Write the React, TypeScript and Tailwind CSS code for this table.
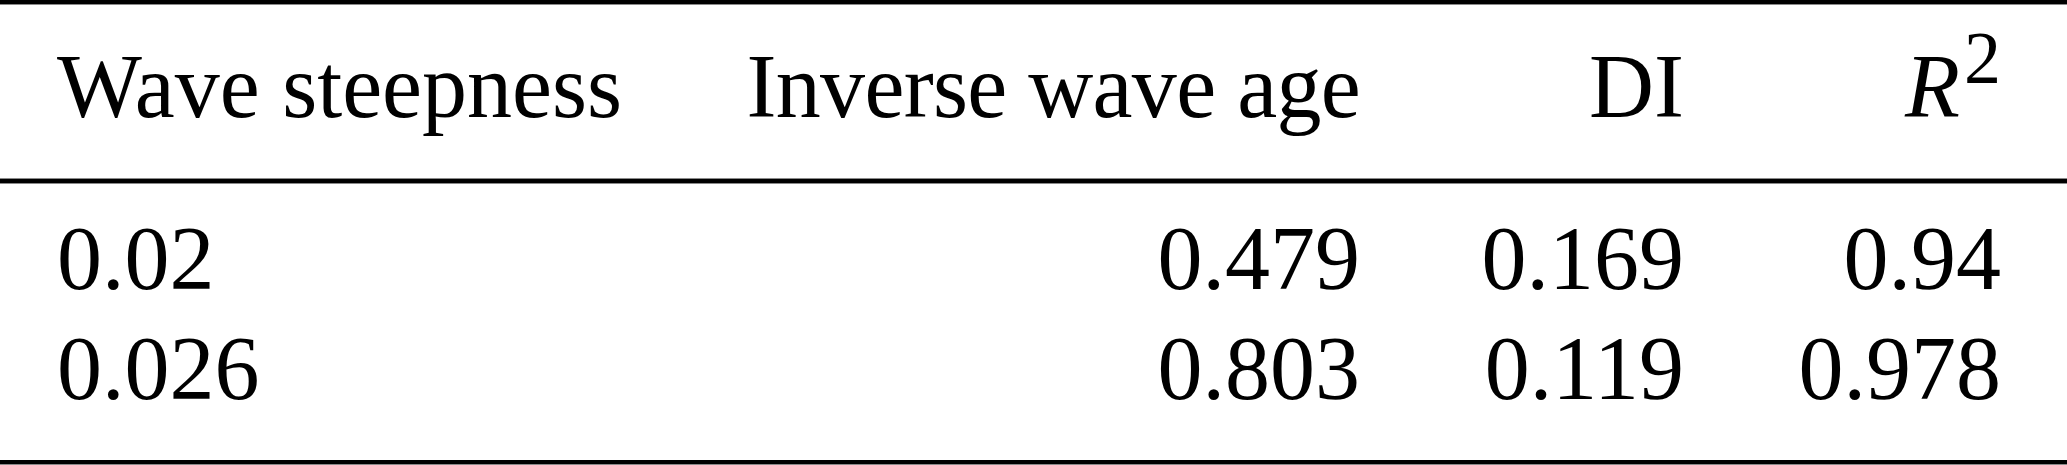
const header = ['Wave steepness', 'Inverse wave age', 'DI'];

const rows = [
  ['0.02', '0.479', '0.169', '0.94'],
  ['0.026', '0.803', '0.119', '0.978'],
];

const cols = 'grid grid-cols-[670px_633px_324px_317px] pl-[57px] pr-[66px]';

const Rule = ({ top }: { top?: boolean }) =>
  top ? (
    <div className="h-[5px] bg-black border-b border-[#8a8a8a]" />
  ) : (
    <div className="h-[6px] bg-black border-y border-[#8a8a8a]" />
  );

export default function App() {
  return (
    <div className="w-[2067px] h-[465px] bg-white text-black font-['Liberation_Serif','Times_New_Roman',serif] text-[90px] leading-[110px]">
      <Rule top />
      <div className={`${cols} pt-[27px] pb-[36px]`}>
        <div className="text-left whitespace-nowrap">{header[0]}</div>
        <div className="text-right whitespace-nowrap tracking-[-0.7px]">{header[1]}</div>
        <div className="text-right whitespace-nowrap">{header[2]}</div>
        <div className="text-right whitespace-nowrap">
          <i>R</i>
          <span className="relative -top-[34px] ml-[4px] align-baseline text-[74px] leading-[0]">2</span>
        </div>
      </div>
      <Rule />
      <div className="pt-[20px] pb-[36px]">
        {rows.map((r) => (
          <div key={r[0]} className={cols}>
            {r.map((v, i) => (
              <div key={i} className={i === 0 ? 'text-left' : 'text-right'}>
                {v}
              </div>
            ))}
          </div>
        ))}
      </div>
      <div className="h-[5px] bg-black border-b border-[#8a8a8a]" />
    </div>
  );
}
